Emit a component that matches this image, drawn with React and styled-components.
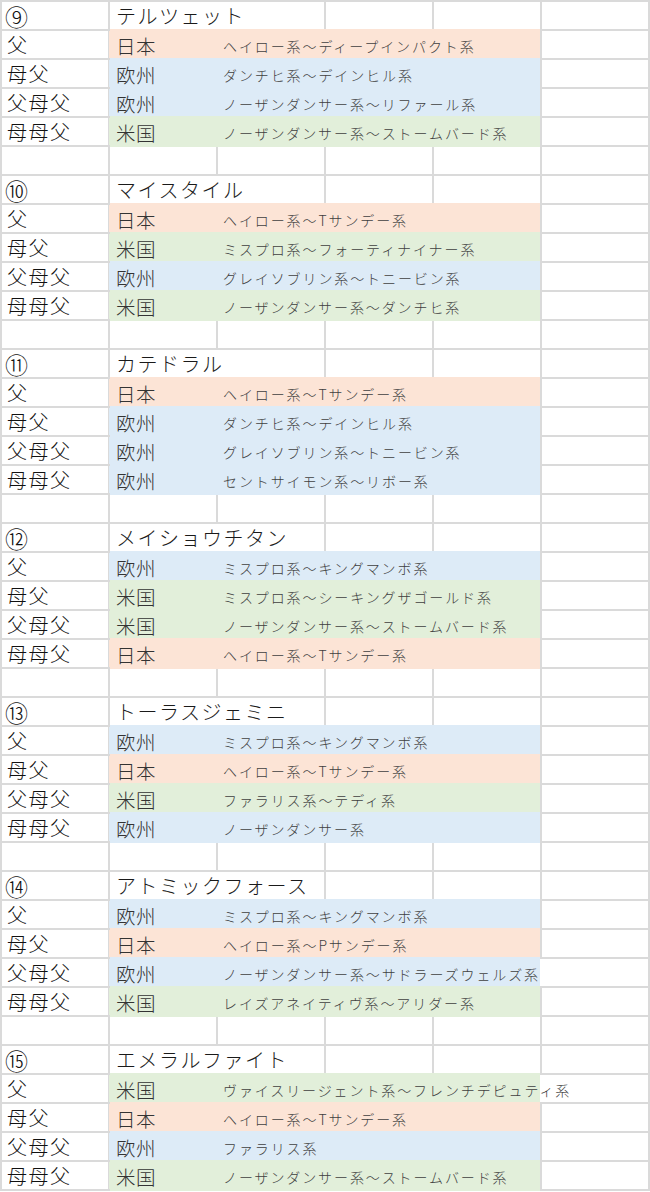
import { Fragment } from 'react';
import styled, { createGlobalStyle } from 'styled-components';

const fills = { 日本: '#fce4d6', 欧州: '#ddebf7', 米国: '#e2efda' };
const labels = ['父', '母父', '父母父', '母母父'];

const horses = [
  {
    no: '⑨',
    name: 'テルツェット',
    lines: [
      ['日本', 'ヘイロー系〜ディープインパクト系'],
      ['欧州', 'ダンチヒ系〜デインヒル系'],
      ['欧州', 'ノーザンダンサー系〜リファール系'],
      ['米国', 'ノーザンダンサー系〜ストームバード系'],
    ],
  },
  {
    no: '⑩',
    name: 'マイスタイル',
    lines: [
      ['日本', 'ヘイロー系〜Tサンデー系'],
      ['米国', 'ミスプロ系〜フォーティナイナー系'],
      ['欧州', 'グレイソブリン系〜トニービン系'],
      ['米国', 'ノーザンダンサー系〜ダンチヒ系'],
    ],
  },
  {
    no: '⑪',
    name: 'カテドラル',
    lines: [
      ['日本', 'ヘイロー系〜Tサンデー系'],
      ['欧州', 'ダンチヒ系〜デインヒル系'],
      ['欧州', 'グレイソブリン系〜トニービン系'],
      ['欧州', 'セントサイモン系〜リボー系'],
    ],
  },
  {
    no: '⑫',
    name: 'メイショウチタン',
    lines: [
      ['欧州', 'ミスプロ系〜キングマンボ系'],
      ['米国', 'ミスプロ系〜シーキングザゴールド系'],
      ['米国', 'ノーザンダンサー系〜ストームバード系'],
      ['日本', 'ヘイロー系〜Tサンデー系'],
    ],
  },
  {
    no: '⑬',
    name: 'トーラスジェミニ',
    lines: [
      ['欧州', 'ミスプロ系〜キングマンボ系'],
      ['日本', 'ヘイロー系〜Tサンデー系'],
      ['米国', 'ファラリス系〜テディ系'],
      ['欧州', 'ノーザンダンサー系'],
    ],
  },
  {
    no: '⑭',
    name: 'アトミックフォース',
    lines: [
      ['欧州', 'ミスプロ系〜キングマンボ系'],
      ['日本', 'ヘイロー系〜Pサンデー系'],
      ['欧州', 'ノーザンダンサー系〜サドラーズウェルズ系'],
      ['米国', 'レイズアネイティヴ系〜アリダー系'],
    ],
  },
  {
    no: '⑮',
    name: 'エメラルファイト',
    lines: [
      ['米国', 'ヴァイスリージェント系〜フレンチデピュティ系'],
      ['日本', 'ヘイロー系〜Tサンデー系'],
      ['欧州', 'ファラリス系'],
      ['米国', 'ノーザンダンサー系〜ストームバード系'],
    ],
  },
];

const App = () => (
  <>
    <GlobalStyle />
    <Sheet>
      {horses.map((horse, i) => (
        <Fragment key={horse.no}>
          <Number>{horse.no}</Number>
          <Title>{horse.name}</Title>
          <Cell />
          <Cell />
          <Cell />
          {horse.lines.map(([region, line], j) => (
            <Fragment key={j}>
              <Label>{labels[j]}</Label>
              <Band $fill={fills[region]} $last={j === horse.lines.length - 1}>
                <Region>{region}</Region>
                <Lineage>{line}</Lineage>
              </Band>
              <Cell $spill={line.length >= 20} />
            </Fragment>
          ))}
          {i < horses.length - 1 &&
            Array.from({ length: 6 }, (_, k) => <Cell key={`e${k}`} />)}
        </Fragment>
      ))}
    </Sheet>
  </>
);

const GlobalStyle = createGlobalStyle`
  body {
    margin: 0;
    background: #fff;
  }
`;

const Sheet = styled.div`
  display: grid;
  grid-template-columns: repeat(6, 106px);
  grid-auto-rows: 27px;
  gap: 2px;
  padding: 2px;
  width: 650px;
  box-sizing: border-box;
  background: #dadada;
  font-family: 'Noto Sans CJK JP', 'Noto Sans', sans-serif;
  font-weight: 300;
`;

const Cell = styled.div`
  background: #fff;
  box-shadow: ${({ $spill }) => ($spill ? '-2px 0 0 #fff' : 'none')};
`;

const Label = styled.div`
  background: #fff;
  display: flex;
  align-items: center;
  padding-left: 5px;
  font-size: 20px;
  letter-spacing: 1.5px;
  color: #111;
  white-space: nowrap;
`;

const Number = styled(Label)`
  padding-left: 3px;
  font-size: 23px;
`;

const Title = styled(Label)`
  grid-column: span 2;
  padding-left: 6px;
  color: #1a1a1a;
`;

const Band = styled.div`
  grid-column: span 4;
  position: relative;
  z-index: 1;
  display: grid;
  grid-template-columns: 107px minmax(0, 1fr);
  align-items: center;
  padding-left: 6px;
  background: ${({ $fill }) => $fill};
  box-shadow: ${({ $fill, $last }) =>
    $last
      ? `0 -2px 0 ${$fill}, 0 2px 0 ${$fill}, -1px 0 0 ${$fill}`
      : `0 -2px 0 ${$fill}, -1px 0 0 ${$fill}`};
  white-space: nowrap;
`;

const Region = styled.span`
  font-size: 19.5px;
  letter-spacing: 0.5px;
  color: #333;
`;

const Lineage = styled.span`
  font-size: 14px;
  letter-spacing: 1.9px;
  color: #404040;
  overflow: visible;
`;

export default App;
